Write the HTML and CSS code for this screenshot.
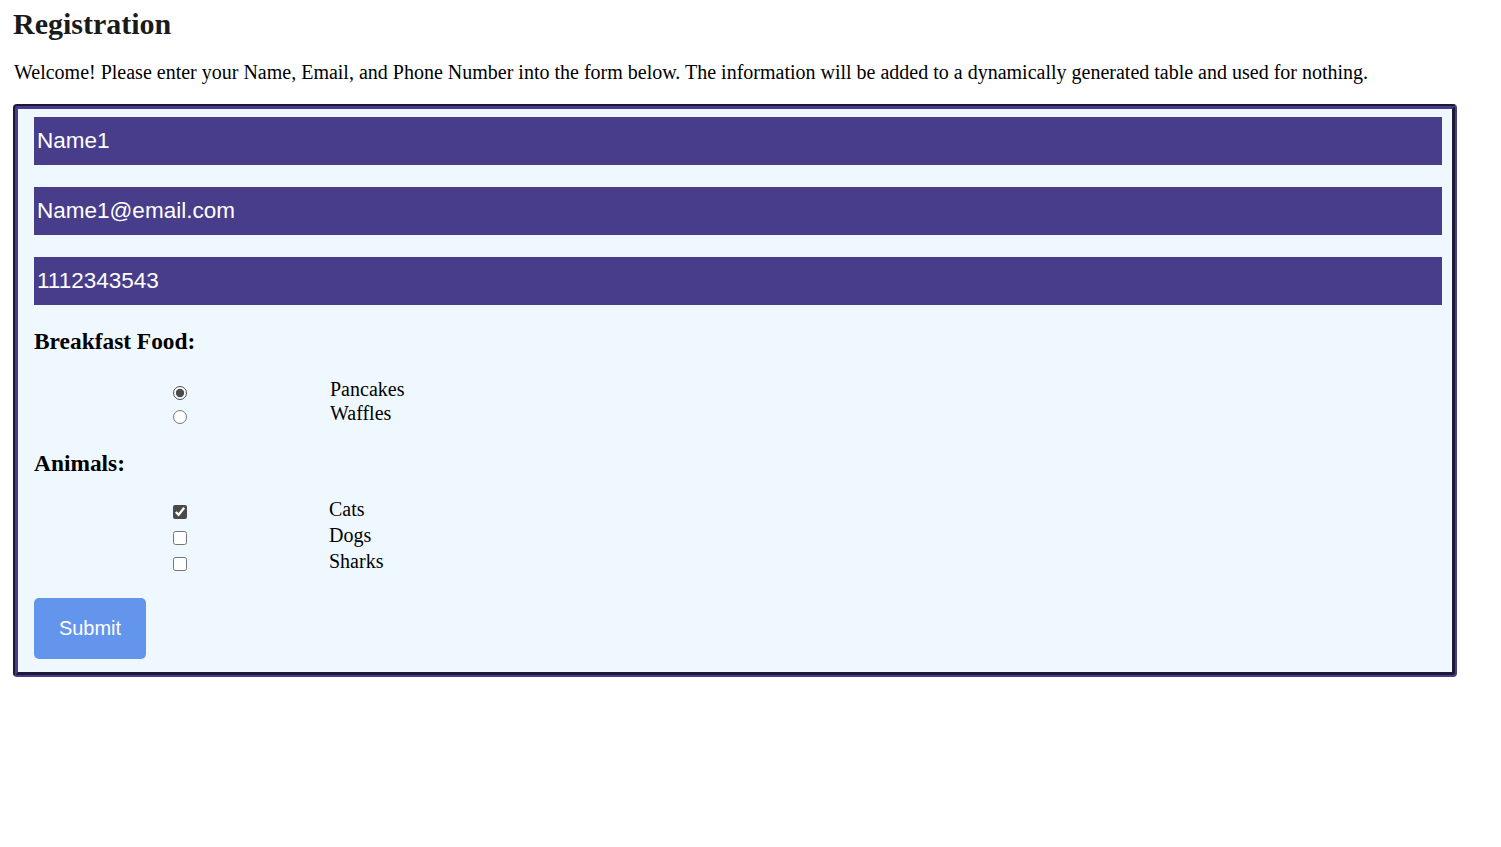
FILE: index.html
```html
<!DOCTYPE html>
<html>
<head>
<meta charset="utf-8">
<title>Registration</title>
<link rel="stylesheet" href="styles.css">
</head>
<body>
<h1 class="title">Registration</h1>
<p class="intro">Welcome! Please enter your Name, Email, and Phone Number into the form below. The information will be added to a dynamically generated table and used for nothing.</p>
<form class="reg-form">
  <input class="field" type="text" value="Name1">
  <input class="field" type="text" value="Name1@email.com">
  <input class="field" type="text" value="1112343543">
  <h3 class="group-title">Breakfast Food:</h3>
  <div class="options radios">
    <input type="radio" name="food" checked><span class="opt-label">Pancakes</span>
    <input type="radio" name="food"><span class="opt-label">Waffles</span>
  </div>
  <h3 class="group-title">Animals:</h3>
  <div class="options checks">
    <input type="checkbox" checked><span class="opt-label">Cats</span>
    <input type="checkbox"><span class="opt-label">Dogs</span>
    <input type="checkbox"><span class="opt-label">Sharks</span>
  </div>
  <button class="submit" type="button">Submit</button>
</form>
</body>
</html>
```
FILE: styles.css
```css
html, body {
  margin: 0;
  padding: 0;
  background: #ffffff;
}
body {
  padding: 0 13px;
  font-family: "Liberation Serif", "Times New Roman", serif;
  font-size: 20px;
  color: #000;
}
.title {
  font-size: 30px;
  font-weight: bold;
  margin: 0;
  padding-top: 6px;
  line-height: 36px;
  color: #1a1a1a;
}
.intro {
  margin: 18px 0 0 1px;
  line-height: 24px;
}
.reg-form {
  margin-top: 20px;
  width: 1444px;
  box-sizing: border-box;
  background: #F0F8FF;
  border: 5px groove #483D8B;
  border-radius: 4px;
  padding: 8px 10px 13px 16px;
}
.field {
  display: block;
  box-sizing: border-box;
  width: 100%;
  height: 48px;
  margin: 0 0 22px 0;
  padding: 0 3px;
  border: none;
  background: #483D8B;
  color: #fff;
  font-family: "Liberation Sans", Arial, sans-serif;
  font-size: 22.5px;
  outline: none;
}
.group-title {
  font-size: 23.4px;
  margin: 0;
  line-height: 28px;
}
.radios {
  margin: 22px 0 24px;
}
.checks {
  margin: 20px 0 23px;
}
.options {
  display: grid;
  grid-template-columns: 292px auto;
  column-gap: 4px;
  align-items: start;
}
.options input {
  justify-self: center;
  margin: 0;
  accent-color: #4a4a4a;
}
.radios input {
  width: 14px;
  height: 14px;
  margin-top: 9px;
}
.checks input {
  width: 14px;
  height: 14px;
  margin: 8px 0 4px;
}
.checks .opt-label {
  margin-left: -1px;
}
.opt-label {
  line-height: 24px;
}
.submit {
  display: block;
  width: 112px;
  height: 61px;
  border: none;
  border-radius: 5px;
  background: #6495ED;
  color: #fff;
  font-family: "Liberation Sans", Arial, sans-serif;
  font-size: 20px;
  cursor: pointer;
}
```
